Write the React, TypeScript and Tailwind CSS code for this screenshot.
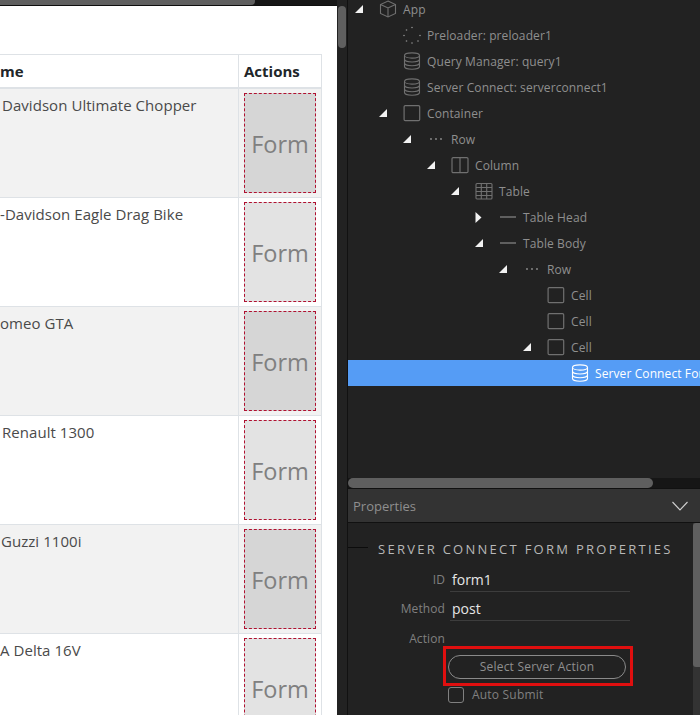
import React from "react";

const Tri = () => (
  <svg width="8" height="8" viewBox="0 0 8 8" className="block"><path d="M8 0V8H0Z" fill="#f2f2f2" /></svg>
);
const TriRight = () => (
  <svg width="7" height="11" viewBox="0 0 7 11" className="block"><path d="M0.5 0L6.5 5.5L0.5 11Z" fill="#f2f2f2" /></svg>
);
const stroke = "#707070";
const Cube = () => (
  <svg width="18" height="18" viewBox="0 0 18 18" fill="none" stroke={stroke} strokeWidth="1.1">
    <path d="M9 1L16.5 4.5V13.5L9 17L1.5 13.5V4.5Z" /><path d="M1.5 4.5L9 8L16.5 4.5M9 8V17" />
  </svg>
);
const Dots = () => (
  <svg width="18" height="18" viewBox="0 0 18 18" fill="#909090">
    <circle cx="9" cy="1.5" r="0.8" /><circle cx="3.5" cy="4" r="0.8" /><circle cx="1" cy="9.5" r="0.8" /><circle cx="3.5" cy="15" r="0.8" /><circle cx="9" cy="17" r="0.8" /><circle cx="15" cy="15" r="0.8" /><circle cx="17" cy="9.5" r="0.8" />
  </svg>
);
const Db = ({ c = stroke }: { c?: string }) => (
  <svg width="18" height="18" viewBox="0 0 18 18" fill="none" stroke={c} strokeWidth="1.1">
    <ellipse cx="9" cy="3.5" rx="7.5" ry="2.6" />
    <path d="M1.5 3.5V14.5C1.5 16 5 17.2 9 17.2S16.5 16 16.5 14.5V3.5" />
    <path d="M1.5 7.3C1.5 8.8 5 10 9 10S16.5 8.8 16.5 7.3M1.5 11C1.5 12.5 5 13.7 9 13.7S16.5 12.5 16.5 11" />
  </svg>
);
const Square = () => (
  <svg width="18" height="18" viewBox="0 0 18 18" fill="none" stroke={stroke} strokeWidth="1.2"><rect x="1.1" y="1.6" width="15.6" height="15" rx="1.2" /></svg>
);
const RowDots = () => (
  <svg width="18" height="18" viewBox="0 0 18 18" fill="#909090"><circle cx="4" cy="9" r="0.9" /><circle cx="9" cy="9" r="0.9" /><circle cx="14" cy="9" r="0.9" /></svg>
);
const Col = () => (
  <svg width="18" height="18" viewBox="0 0 18 18" fill="none" stroke={stroke} strokeWidth="1.2"><rect x="1" y="1.6" width="16" height="15" rx="1.2" /><path d="M9 1.6V16.6" /></svg>
);
const Tbl = () => (
  <svg width="18" height="18" viewBox="0 0 18 18" fill="none" stroke={stroke} strokeWidth="1.1"><rect x="1" y="1.5" width="16" height="15.5" rx="1" /><path d="M1 5.5H17M1 9.5H17M1 13.5H17M6.3 1.5V17M11.7 1.5V17" /></svg>
);
const Dash = () => (
  <svg width="18" height="18" viewBox="0 0 18 18"><path d="M1 9H17" stroke="#707070" strokeWidth="1.6" /></svg>
);

type Node = { label: string; level: number; icon: React.ReactNode; tri?: "down" | "right"; active?: boolean };
const tree: Node[] = [
  { label: "App", level: 0, icon: <Cube />, tri: "down" },
  { label: "Preloader: preloader1", level: 1, icon: <Dots /> },
  { label: "Query Manager: query1", level: 1, icon: <Db /> },
  { label: "Server Connect: serverconnect1", level: 1, icon: <Db /> },
  { label: "Container", level: 1, icon: <Square />, tri: "down" },
  { label: "Row", level: 2, icon: <RowDots />, tri: "down" },
  { label: "Column", level: 3, icon: <Col />, tri: "down" },
  { label: "Table", level: 4, icon: <Tbl />, tri: "down" },
  { label: "Table Head", level: 5, icon: <Dash />, tri: "right" },
  { label: "Table Body", level: 5, icon: <Dash />, tri: "down" },
  { label: "Row", level: 6, icon: <RowDots />, tri: "down" },
  { label: "Cell", level: 7, icon: <Square /> },
  { label: "Cell", level: 7, icon: <Square /> },
  { label: "Cell", level: 7, icon: <Square />, tri: "down" },
  { label: "Server Connect Form: form1", level: 8, icon: <Db c="#ffffff" />, active: true },
];

const rows = [
  "Davidson Ultimate Chopper",
  "-Davidson Eagle Drag Bike",
  "omeo GTA",
  "Renault 1300",
  "Guzzi 1100i",
  "A Delta 16V",
];
const rowPad = ["pl-[2px]", "pl-0", "pl-0", "pl-[2px]", "pl-[1px]", "pl-0"];

export default function App() {
  return (
    <div className="flex h-[715px] w-[700px] overflow-hidden bg-[#222222] font-['Open_Sans',sans-serif]">
      <div className="flex h-full w-[337px] shrink-0 flex-col">
        <div className="h-[6px] shrink-0 border-b border-[#0e0e0e] bg-[#161616]">
          <div className="h-[5px] w-[255px] rounded-br-[4px] bg-[#5f5f5f]" />
        </div>
        <div className="flex-1 overflow-hidden bg-white pt-[48px] pr-[15px] text-[15px] text-[#4a4a4a]">
          <div className="flex h-[34px] border-y border-[#dee2e6] bg-white font-bold text-[#212529]">
            <div className="flex w-[238px] items-center">me</div>
            <div className="flex flex-1 items-center border-x border-[#dee2e6] pl-[5px]">Actions</div>
          </div>
          <div className="h-[1px] bg-[#dee2e6]" />
          {rows.map((r, i) => (
            <div key={r} className={`flex h-[109px] border-b border-[#dee2e6] ${i % 2 === 0 ? "bg-[#f2f2f2]" : "bg-white"}`}>
              <div className={`w-[238px] whitespace-nowrap pt-[4px] leading-[24px] tracking-[0.05px] ${rowPad[i]}`}>{r}</div>
              <div className="flex-1 border-x border-[#dee2e6] px-[5px] py-[4px]">
                <div className={`flex h-[100px] items-center justify-center border border-dashed border-[#b01030] pt-[4px] text-[23.5px] leading-none text-[#808080] ${i % 2 === 0 ? "bg-[#d6d6d6]" : "bg-[#e3e3e3]"}`}>Form</div>
              </div>
            </div>
          ))}
        </div>
      </div>
      <div className="w-[11px] shrink-0 border-r border-[#111111] bg-[#222222] pt-[6px] pl-[1px]">
        <div className="h-[42px] w-[8px] rounded-[4px] bg-[#5f5f5f]" />
      </div>
      <div className="flex h-full w-[352px] shrink-0 flex-col text-[12px]">
        <div className="h-[478px] shrink-0 overflow-hidden">
          <div className="mt-[-4px]">
            {tree.map((n, i) => (
              <div key={i} className={`flex h-[26px] items-center whitespace-nowrap ${n.active ? "bg-[#559cf5] text-white" : "text-[#8f8f8f]"}`}>
                <div style={{ width: 7 + n.level * 24 }} className="shrink-0" />
                <div className="flex w-[24px] shrink-0 justify-start">{n.tri === "down" ? <Tri /> : n.tri === "right" ? <TriRight /> : null}</div>
                <div className="mr-[6px] shrink-0">{n.icon}</div>
                <span className="mt-[2px] tracking-[0.1px]">{n.label}</span>
              </div>
            ))}
          </div>
        </div>
        <div className="h-[10px] shrink-0 bg-[#161616]">
          <div className="h-[10px] w-[305px] rounded-[5px] bg-[#5f5f5f]" />
        </div>
        <div className="flex h-[35px] shrink-0 items-center justify-between border-y border-[#111111] bg-[#333333] pr-[12px] pl-[5px] text-[13px] text-[#8f8f8f]">
          <span className="mt-[2px]">Properties</span>
          <svg width="16" height="10" viewBox="0 0 16 10" fill="none" stroke="#cfcfcf" strokeWidth="1.1"><path d="M0.5 1L8 9L15.5 1" /></svg>
        </div>
        <div className="flex min-h-0 flex-1">
          <div className="flex-1">
            <div className="mt-[17px] flex items-center">
              <div className="mb-[4px] h-px w-[20px] bg-[#0c0c0c]" />
              <div className="ml-[10px] text-[13px] leading-[18px] tracking-[2.27px] whitespace-nowrap text-[#b8b8b8]">SERVER CONNECT FORM PROPERTIES</div>
            </div>
            <div className="mt-[5px] flex h-[29px] items-center pt-[5px]">
              <div className="w-[97px] text-right tracking-[0.1px] text-[#808080]">ID</div>
              <div className="ml-[5px] flex h-[24px] w-[180px] items-center border-b border-[#3d3d3d] pl-[2px] text-[14px] text-[#e6e6e6]">form1</div>
            </div>
            <div className="flex h-[29px] items-center pt-[5px]">
              <div className="w-[97px] text-right tracking-[0.1px] text-[#808080]">Method</div>
              <div className="ml-[5px] flex h-[24px] w-[180px] items-center border-b border-[#3d3d3d] pl-[2px] text-[14px] text-[#e6e6e6]">post</div>
            </div>
            <div className="flex h-[29px] items-center pt-[7px]">
              <div className="w-[97px] text-right tracking-[0.1px] text-[#808080]">Action</div>
            </div>
            <div className="-mt-[4px] ml-[95px] flex h-[40px] w-[190px] items-center justify-center border-[3px] border-[#e00f0f] pt-[2px]">
              <div className="mr-[2px] flex h-[24px] w-[178px] items-center justify-center rounded-full border border-[#8a8a8a] tracking-[0.2px] text-[#8f8f8f]">Select Server Action</div>
            </div>
            <div className="ml-[100px] flex items-center">
              <div className="h-[16px] w-[16px] rounded-[3px] border border-[#808080]" />
              <span className="ml-[8px] tracking-[0.2px] text-[#808080]">Auto Submit</span>
            </div>
          </div>
          <div className="w-[7px] shrink-0 bg-[#333333]">
            <div className="h-[144px] w-[7px] rounded-l-[3px] bg-[#5f5f5f]" />
          </div>
        </div>
      </div>
    </div>
  );
}
